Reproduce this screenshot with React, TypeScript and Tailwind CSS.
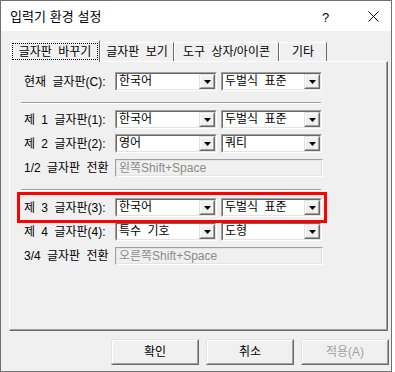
import React from "react";

const FONT = "font-['Liberation_Sans','Noto_Sans_CJK_KR',sans-serif]";

function Arrow() {
  return (
    <div className="w-[16px] h-full border border-t-[#e3e3e3] border-l-[#e3e3e3] border-b-[#696969] border-r-[#696969]">
      <div className="w-full h-full border border-t-white border-l-white border-b-[#a0a0a0] border-r-[#a0a0a0] bg-[#f0f0f0] flex items-center justify-center">
        <svg width="7" height="4" viewBox="0 0 7 4">
          <path d="M0 0H7L3.5 4Z" fill="#000" />
        </svg>
      </div>
    </div>
  );
}

function Combo({ text, wide }: { text: string; wide: boolean }) {
  return (
    <div
      className={`h-[19px] border border-t-[#a0a0a0] border-l-[#a0a0a0] border-b-white border-r-white ${
        wide ? "w-[102px]" : "w-[101px]"
      }`}
    >
      <div className="h-full border border-t-[#696969] border-l-[#696969] border-b-[#e3e3e3] border-r-[#e3e3e3] bg-white flex">
        <div className="flex-1 pl-[2px] leading-[15px] whitespace-nowrap overflow-hidden">{text}</div>
        <Arrow />
      </div>
    </div>
  );
}

function Row({ label, a, b, mt }: { label: string; a: string; b: string; mt: string }) {
  return (
    <div className={`flex items-center h-[19px] pl-[14px] ${mt}`}>
      <div className="w-[91px] whitespace-nowrap">{label}</div>
      <div className="flex gap-[4px]">
        <Combo text={a} wide />
        <Combo text={b} wide={false} />
      </div>
    </div>
  );
}

function EditRow({ label, value, mt }: { label: string; value: string; mt: string }) {
  return (
    <div className={`flex items-center h-[18px] pl-[14px] ${mt}`}>
      <div className="w-[91px] whitespace-nowrap">{label}</div>
      <div className="w-[208px] h-[18px] border border-t-[#a0a0a0] border-l-[#a0a0a0] border-b-white border-r-white">
        <div className="h-full border border-[#e3e3e3] bg-[#f0f0f0] pl-[2px] leading-[14px] text-[#8a8a8a] whitespace-nowrap">
          {value}
        </div>
      </div>
    </div>
  );
}

function Sep({ mt }: { mt: string }) {
  return <div className={`ml-[11px] w-[300px] h-[2px] border-t border-t-[#a0a0a0] border-b border-b-white ${mt}`} />;
}

function Btn({ text, disabled }: { text: string; disabled?: boolean }) {
  return (
    <div className="w-[88px] h-[26px] border border-t-[#e3e3e3] border-l-[#e3e3e3] border-b-[#696969] border-r-[#696969]">
      <div
        className={`w-full h-full border border-t-white border-l-white border-b-[#a0a0a0] border-r-[#a0a0a0] bg-[#f0f0f0] flex items-center justify-center ${
          disabled ? "text-[#a0a0a0]" : "text-black"
        }`}
      >
        {text}
      </div>
    </div>
  );
}

function Tab({ text, w, selected }: { text: string; w: string; selected?: boolean }) {
  if (selected) {
    return (
      <div className={`relative z-10 h-[22px] -mb-[1px] ${w} border-t border-l border-t-white border-l-white border-r border-r-[#696969] bg-[#f0f0f0] flex items-start justify-center pt-[2px] px-[1px]`}>
        <div className="w-full h-[17px] border border-dotted border-black flex items-center justify-center leading-[14px]">
          {text}
        </div>
      </div>
    );
  }
  return (
    <div className={`h-[19px] ${w} border-t border-l border-t-white border-l-white border-r border-r-[#696969] bg-[#f0f0f0] flex items-center justify-center leading-[14px]`}>
      {text}
    </div>
  );
}

export default function App() {
  return (
    <div className={`w-[395px] h-[372px] bg-white ${FONT} text-[12px] [word-spacing:3px] text-black`}>
      <div className="relative w-[392px] h-[372px] border border-[#707070] bg-[#f0f0f0] flex flex-col">
        {/* Title bar */}
        <div className="h-[30px] bg-white flex items-center pl-[9px] relative">
          <span className="text-[13px] [word-spacing:1px] font-['Noto_Sans_CJK_KR',sans-serif]">입력기 환경 설정</span>
          <span className="absolute left-[321px] top-[7px] text-[13px] font-['Liberation_Sans',sans-serif]">?</span>
          <svg className="absolute left-[367px] top-[10px]" width="11" height="11" viewBox="0 0 11 11">
            <path d="M0.5 0.5L10.5 10.5M10.5 0.5L0.5 10.5" stroke="#000" strokeWidth="1" />
          </svg>
        </div>

        {/* Body */}
        <div className="flex-1 pl-[8px] pt-[9px]">
          {/* Tabs */}
          <div className="flex items-end h-[21px] ml-[1px]">
            <Tab text="글자판 바꾸기" w="w-[90px]" selected />
            <Tab text="글자판 보기" w="w-[74px]" />
            <Tab text="도구 상자/아이콘" w="w-[105px]" />
            <Tab text="기타" w="w-[48px]" />
          </div>

          {/* Panel */}
          <div className="w-[379px] h-[270px] border border-t-white border-l-white border-b-[#696969] border-r-[#696969]">
            <div className="w-full h-full border-b border-r border-b-[#a0a0a0] border-r-[#a0a0a0] flex flex-col">
              <Row label="현재 글자판(C):" a="한국어" b="두벌식 표준" mt="mt-[10px]" />
              <Sep mt="mt-[11px]" />
              <Row label="제 1 글자판(1):" a="한국어" b="두벌식 표준" mt="mt-[6px]" />
              <Row label="제 2 글자판(2):" a="영어" b="쿼티" mt="mt-[5px]" />
              <EditRow label="1/2 글자판 전환" value="왼쪽Shift+Space" mt="mt-[6px]" />
              <Sep mt="mt-[12px]" />
              <Row label="제 3 글자판(3):" a="한국어" b="두벌식 표준" mt="mt-[7px]" />
              <Row label="제 4 글자판(4):" a="특수 기호" b="도형" mt="mt-[5px]" />
              <EditRow label="3/4 글자판 전환" value="오른쪽Shift+Space" mt="mt-[6px]" />
            </div>
          </div>

          {/* Buttons */}
          <div className="flex gap-[7px] mt-[8px] pl-[102px]">
            <Btn text="확인" />
            <Btn text="취소" />
            <Btn text="적용(A)" disabled />
          </div>
        </div>

        {/* Red highlight annotation */}
        <div className="absolute left-[16px] top-[191px] w-[310px] h-[31px] border-[3px] border-[#ff0000]" />
      </div>
    </div>
  );
}
